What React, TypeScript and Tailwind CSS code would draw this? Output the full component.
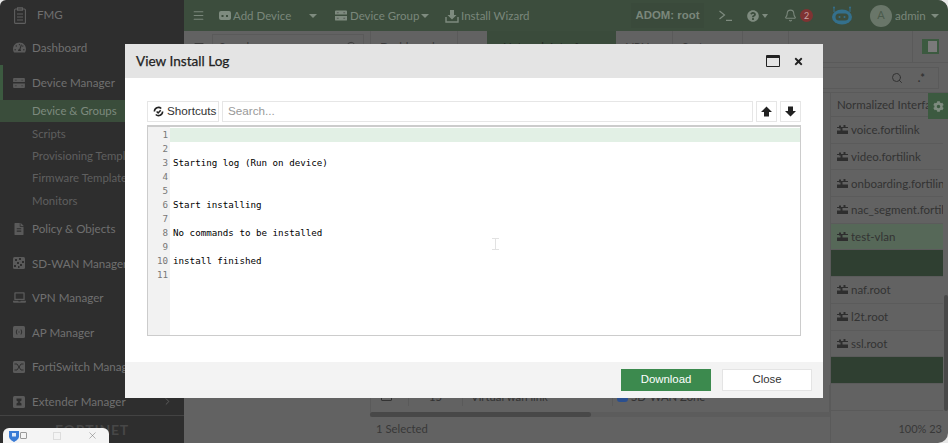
import React from "react";
import { Menu, ChevronRight, Search, X, Bell } from "lucide-react";
import { FaCog, FaTimes, FaQuestionCircle, FaTachometerAlt, FaFileAlt, FaLaptop } from "react-icons/fa";

const ICON = "#5a5a5a";
const BAR = "#7e8b7f";

function GridIcon({ color = ICON, w = 13, h = 11 }: { color?: string; w?: number; h?: number }) {
  return (
    <svg width={w} height={h} viewBox="0 0 13 11" className="shrink-0">
      <path d="M0 1a1 1 0 0 1 1-1h11a1 1 0 0 1 1 1v3.5H0zM0 6h13v4a1 1 0 0 1-1 1H1a1 1 0 0 1-1-1z" fill={color} />
      <path d="M2 2h2v1H2zM9 2h2v1H9zM2 8h2v1H2zM9 8h2v1H9z" fill="#2e2e2e" opacity="0.5" />
    </svg>
  );
}

function BoxIcon({ kind }: { kind: string }) {
  return (
    <svg width="12" height="12" viewBox="0 0 12 12" className="shrink-0">
      <rect width="12" height="12" rx="1.5" fill={ICON} />
      {kind === "ap" && <path d="M4 3.5Q2.5 6 4 8.5M8 3.5Q9.5 6 8 8.5M5.5 6h1" stroke="#2e2e2e" fill="none" />}
      {kind === "sw" && <path d="M1.5 3h2.5l4 6h2.5M1.5 9h2.5l4-6h2.5" stroke="#2e2e2e" fill="none" />}
      {kind === "ext" && <path d="M3.5 2.5h5v2l-2 1.5 2 1.5v2h-5v-2l2-1.5-2-1.5z" fill="#2e2e2e" />}
      {kind === "sd" && <path d="M2 2h2v2H2zM6 1h2v2H6zM9 4h2v2H9zM4 5h2v2H4zM1 8h2v2H1zM7 7h2v2H7zM5 9h1.5v2H5z" fill="#2e2e2e" />}
    </svg>
  );
}

function Side({ label, icon, active }: { label: string; icon: React.ReactNode; active?: boolean }) {
  return (
    <div className={`flex h-[34.6px] shrink-0 items-center border-l-[3px] pl-[10px] text-[11.6px] ${active ? "border-[#3c5a40]" : "border-transparent"}`}>
      <span className="flex w-[19px] shrink-0">{icon}</span>
      <span className="whitespace-nowrap text-[#707070]">{label}</span>
    </div>
  );
}

function Sub({ label, active }: { label: string; active?: boolean }) {
  return (
    <div className={`flex h-[22.3px] shrink-0 items-center pl-[32px] text-[11.4px] whitespace-nowrap ${active ? "bg-[#3a4d3b] text-[#7d8a7e]" : "text-[#5f5f5f]"}`}>
      {label}
    </div>
  );
}

function IfaceIcon() {
  return (
    <svg width="11" height="9" viewBox="0 0 11 9" className="shrink-0">
      <path d="M0 2h11v1H0zM0 5.5h11V9H0z" fill="#2e2e2e" />
      <path d="M2 0.5h2v3H2zM6.5 0h2v3H6.5zM3.5 3h2v3h-2z" fill="#2e2e2e" />
    </svg>
  );
}

function Row({ label, tone }: { label?: string; tone?: "dark" | "sel" }) {
  const bg = tone === "dark" ? "bg-[#2f3f31]" : tone === "sel" ? "bg-[#566858]" : "";
  return (
    <div className={`flex h-[26.7px] shrink-0 items-center gap-[3px] overflow-hidden border-b border-[#5b5b5b] pl-[6px] text-[11.5px] text-[#333] whitespace-nowrap ${bg}`}>
      {label && <IfaceIcon />}
      {label}
    </div>
  );
}

function Caret({ className = "" }: { className?: string }) {
  return <span className={`shrink-0 border-x-[4px] border-t-[4px] border-x-transparent border-t-[#7e8b7f] ${className}`} />;
}

function Arrow({ down }: { down?: boolean }) {
  return (
    <svg width="11" height="11" viewBox="0 0 11 11" className={down ? "rotate-180" : ""}>
      <path d="M5.5 0.5L11 6H8v4.5H3V6H0z" fill="#222" />
    </svg>
  );
}

export default function App() {
  const lines = ["", "", "Starting log (Run on device)", "", "", "Start installing", "", "No commands to be installed", "", "install finished", ""];
  return (
    <div className="relative flex h-[443px] w-[948px] overflow-hidden bg-[#e8e8e8] font-['Lato','Open_Sans',sans-serif]">
      <aside className="flex w-[184px] shrink-0 flex-col rounded-tl-[6px] bg-[#2e2e2e]">
        <div className="flex h-[30px] shrink-0 items-center gap-[11px] pl-[14px] text-[11.6px] text-[#707070]">
          <svg width="12" height="17" viewBox="0 0 12 17" fill="none" stroke="#5f5f5f" strokeWidth="1.1">
            <rect x="0.6" y="2" width="10.8" height="14.4" rx="1" />
            <path d="M3.5 0.8h5v2.4h-5zM3 7h6M3 10h6M3 13h6" />
          </svg>
          FMG
        </div>
        <Side label="Dashboard" icon={<FaTachometerAlt size={13} color={ICON} />} />
        <div className="h-[0.7px] shrink-0" />
        <Side label="Device Manager" active icon={<GridIcon w={12} h={10} />} />
        <Sub label="Device & Groups" active />
        <Sub label="Scripts" />
        <Sub label="Provisioning Templates" />
        <Sub label="Firmware Templates" />
        <Sub label="Monitors" />
        <Side label="Policy & Objects" icon={<FaFileAlt size={12} color={ICON} />} />
        <Side label="SD-WAN Manager" icon={<BoxIcon kind="sd" />} />
        <Side label="VPN Manager" icon={<FaLaptop size={13} color={ICON} />} />
        <Side label="AP Manager" icon={<BoxIcon kind="ap" />} />
        <Side label="FortiSwitch Manager" icon={<BoxIcon kind="sw" />} />
        <div className="relative shrink-0">
          <Side label="Extender Manager" icon={<BoxIcon kind="ext" />} />
          <ChevronRight size={11} className="absolute right-[11px] top-[12px] text-[#5f5f5f]" />
        </div>
        <div className="-mt-[4px] flex flex-1 items-center justify-center border-t border-[#434343] bg-[#2e2e2e] text-[14px] font-bold tracking-[0.8px] text-[#474747]">
          FORTINET
        </div>
      </aside>

      <main className="flex min-w-0 flex-1 flex-col overflow-hidden rounded-r-[10px] bg-[#626262]">
        <header className="flex h-[31px] shrink-0 items-center bg-[#3c4d3d] pl-[8px] text-[11.5px] text-[#7a877b]">
          <Menu size={13} className="mr-[14px] shrink-0" />
          <svg width="12" height="9" viewBox="0 0 12 9" className="mr-[2px] shrink-0"><rect width="12" height="9" rx="2" fill={BAR} /><path d="M2.5 4h2v2h-2zM7 4h2v2H7z" fill="#3c4d3d" /></svg>
          <span className="w-[76px] shrink-0">Add Device</span>
          <Caret className="mr-[18px]" />
          <GridIcon color={BAR} w={12} h={11} />
          <span className="ml-[3px] w-[71px] shrink-0 whitespace-nowrap">Device Group</span>
          <Caret className="mr-[16px]" />
          <svg width="14" height="14" viewBox="0 0 14 14" className="mr-[2px] shrink-0"><path d="M1 8v5h12V8" fill="none" stroke={BAR} strokeWidth="1.4" /><path d="M5 1h4v5h2.5L7 10.5 2.5 6H5z" fill={BAR} /></svg>
          <span className="w-[66px] shrink-0 whitespace-nowrap">Install Wizard</span>
          <span className="ml-[104px] flex h-[25px] w-[73px] shrink-0 items-center justify-center bg-[#3a4a3b] font-['Liberation_Sans',sans-serif] text-[11.4px] font-bold">ADOM: root</span>
          <svg width="13" height="11" viewBox="0 0 13 11" className="ml-[15px] shrink-0" fill="none" stroke={BAR} strokeWidth="1.2"><path d="M0.5 1l5 4-5 4M7 10.4h6" /></svg>
          <span className="ml-[15px] shrink-0"><FaQuestionCircle size={12} color={BAR} /></span>
          <span className="ml-[3px] shrink-0 border-x-[3.5px] border-t-[4px] border-x-transparent border-t-[#7e8b7f]" />
          <Bell size={13} className="ml-[16px] shrink-0" />
          <span className="ml-[3px] flex h-[13px] w-[13px] shrink-0 items-center justify-center rounded-full bg-[#7f3333] text-[9px] text-[#c9a5a5]">2</span>
          <svg width="24" height="20" viewBox="0 0 24 20" className="ml-[17px] shrink-0">
            <path d="M4 1v5M20 1v5" stroke="#34708c" strokeWidth="1" />
            <circle cx="4" cy="1.5" r="1" fill="#34708c" /><circle cx="20" cy="1.5" r="1" fill="#34708c" />
            <ellipse cx="12" cy="11" rx="10" ry="7.5" fill="#34708c" />
            <rect x="5.5" y="7.5" width="13" height="7" rx="3.5" fill="#3c4d3d" />
            <circle cx="9.5" cy="11" r="1" fill="#34708c" /><circle cx="14.5" cy="11" r="1" fill="#34708c" />
          </svg>
          <span className="ml-[16px] flex h-[22px] w-[22px] shrink-0 items-center justify-center rounded-full bg-[#697669] text-[11px] text-[#4a5a4b]">A</span>
          <span className="ml-[3px] w-[35px] shrink-0">admin</span>
          <Caret className="ml-[1px]" />
        </header>

        <div className="flex h-[32px] shrink-0 border-b border-[#5a5a5a] text-[11.5px] text-[#3a3a3a]">
          <span className="flex w-[28px] items-center pl-[9px]"><Menu size={12} /></span>
          <div className="my-[3px] flex w-[152px] items-center justify-between border border-[#5a5a5a] pl-[6px] pr-[6px]">Search<Search size={11} /></div>
          <span className="ml-[6px] flex w-[87px] items-center border-l border-[#5a5a5a] pl-[9px]">Dashboard</span>
          <span className="flex w-[30px] items-center justify-center border-l border-[#5a5a5a]"><span className="h-[5px] w-[3px] bg-[#3a3a3a]" /></span>
          <span className="flex w-[129px] items-center justify-center bg-[#3a4b3b] text-[#232a24]">Network Interfaces</span>
          <span className="flex w-[56px] items-center pl-[10px]">VPN</span>
          <span className="flex w-[70px] items-center border-l border-[#5a5a5a] pl-[9px]">System</span>
          <span className="flex w-[47px] items-center justify-center border-x border-[#5a5a5a]"><span className="h-[5px] w-[3px] bg-[#3a3a3a]" /></span>
          <span className="w-[123px]" />
          <span className="flex flex-1 items-center border-l border-[#5a5a5a] pb-[1px] pl-[9px]">
            <span className="flex h-[15px] w-[17px] border-2 border-[#3c5a40] bg-[#7a7a7a]"><span className="w-[4px] bg-[#3c5a40]" /></span>
          </span>
        </div>

        <div className="flex h-[29px] shrink-0 items-center pl-[186px] pr-[9px] text-[11px] text-[#333]">
          <div className="flex h-[22px] flex-1 items-center justify-end gap-[15px] border border-[#5a5a5a] pr-[13px]">
            <Search size={12} />
            <span className="font-bold leading-none">.*</span>
          </div>
        </div>

        <div className="flex min-h-0 flex-1 border-t border-[#5a5a5a]">
          <div className="flex min-w-0 flex-1 flex-col">
            <div className="flex-1" />
            <div className="ml-[186px] flex h-[27px] shrink-0 items-start border-x border-[#5a5a5a] pt-[4px] text-[11.3px] text-[#333]">
              <span className="w-[37px] pl-[10px] pt-[2px]"><span className="block h-[10px] w-[11px] rounded-[1px] border border-[#333]" /></span>
              <span className="w-[54px] border-l border-[#5a5a5a] pl-[20px]">15</span>
              <span className="w-[150px] border-l border-[#5a5a5a] pl-[8px]">Virtual wan link</span>
              <span className="flex flex-1 items-center gap-[3px] whitespace-nowrap border-l border-[#5a5a5a] pl-[4px]"><span className="h-[10px] w-[11px] rounded-[3px] bg-[#2a4f8f]" />SD-WAN Zone</span>
            </div>
            <div className="ml-[186px] flex h-[5px] shrink-0 bg-[#5c5c5c]"><span className="h-full w-[221px] rounded bg-[#484848]" /></div>
            <div className="flex h-[26px] shrink-0 items-center pb-[2px] pl-[192px] text-[11.3px] text-[#383838]">1 Selected</div>
          </div>
          <div className="relative flex w-[118px] shrink-0 flex-col border-l border-[#5a5a5a]">
            <div className="flex h-[24px] shrink-0 items-center overflow-hidden border-b border-[#5a5a5a] pl-[6px] pr-[20px] text-[11.5px] text-[#333] whitespace-nowrap">
              Normalized Interface
            </div>
            <div className="absolute right-0 top-0 flex h-[26px] w-[20px] items-center justify-center bg-[#3c5a40]">
              <FaCog size={11} color={BAR} />
            </div>
            <div className="flex min-h-0 flex-1 flex-col pr-[5px]">
              <Row label="voice.fortilink" />
              <Row label="video.fortilink" />
              <Row label="onboarding.fortilink" />
              <Row label="nac_segment.fortilink" />
              <Row label="test-vlan" tone="sel" />
              <Row tone="dark" />
              <Row label="naf.root" />
              <Row label="l2t.root" />
              <Row label="ssl.root" />
              <Row tone="dark" />
              <div className="flex-1 border-b border-[#5a5a5a]" />
            </div>
            <div className="flex h-[32px] shrink-0 items-center justify-end pt-[5px] pb-[1px] pr-[6px] text-[11px] text-[#383838]">100%&nbsp;23</div>
            <div className="absolute right-0 top-[202px] h-[116px] w-[4px] rounded bg-[#484848]" />
          </div>
        </div>
      </main>

      <div className="absolute left-[125px] top-[44px] flex h-[354px] w-[698px] flex-col bg-white">
        <div className="flex h-[34px] shrink-0 items-center bg-[#e4e4e4] pl-[11px] pr-[19px]">
          <span className="text-[13.6px] text-[#222] [-webkit-text-stroke:0.25px_#222]">View Install Log</span>
          <span className="ml-auto h-[12px] w-[14px] rounded-[1px] border border-t-[3px] border-[#222]" />
          <span className="ml-[13px]"><FaTimes size={11} color="#222" /></span>
        </div>
        <div className="flex flex-1 flex-col px-[22px] pt-[23px]">
          <div className="flex h-[21px] shrink-0 gap-[3px] font-['Liberation_Sans',sans-serif] text-[11.7px]">
            <div className="flex w-[72px] items-center gap-[3px] border border-[#e6e6e6] pb-[1px] pl-[5px] text-[#333]">
              <svg width="11" height="11" viewBox="0 0 12 12" fill="none" stroke="#222" strokeWidth="1.7" className="shrink-0"><path d="M1.5 6a4.5 4.5 0 0 1 7.5-3.3M10.5 6A4.5 4.5 0 0 1 3 9.3M4 6l1.6 1.6L8.4 4.6" /></svg>
              Shortcuts
            </div>
            <div className="flex w-[531px] items-center border border-[#e6e6e6] pb-[1px] pl-[5px] text-[#999]">Search...</div>
            <div className="flex w-[21px] items-center justify-center border border-[#e6e6e6]"><Arrow /></div>
            <div className="flex w-[21px] items-center justify-center border border-[#e6e6e6]"><Arrow down /></div>
          </div>
          <div className="relative mt-[3px] flex h-[211px] w-[654px] shrink-0 border border-t-2 border-[#ccc]">
            <div className="w-[22px] shrink-0 bg-[#f2f2f2] pt-[1px] pr-[2px] text-right font-['DejaVu_Sans_Mono',monospace] text-[9.2px] text-[#777]">
              {lines.map((_, i) => <div key={i} className="h-[14px] leading-[14px]">{i + 1}</div>)}
            </div>
            <div className="min-w-0 flex-1 pt-[1px] font-['DejaVu_Sans_Mono',monospace] text-[9.2px] text-black">
              {lines.map((l, i) => <div key={i} className={`h-[14px] whitespace-pre pl-[3px] leading-[14px] ${i === 0 ? "bg-[#e2f0e5]" : ""}`}>{l}</div>)}
            </div>
            <svg width="7" height="12" viewBox="0 0 7 12" className="absolute left-[344px] top-[111px]" fill="none" stroke="#e2e2e2"><path d="M0 0.5h7M0 11.5h7M3.5 0.5v11" /></svg>
          </div>
        </div>
        <div className="flex h-[36px] shrink-0 items-center justify-end gap-[11px] bg-[#f3f3f3] pr-[11px] font-['Liberation_Sans',sans-serif] text-[11.4px]">
          <span className="flex h-[22px] w-[90px] items-center justify-center bg-[#3c8a4e] text-white">Download</span>
          <span className="flex h-[22px] w-[90px] items-center justify-center border border-[#e4e4e4] bg-white text-[#333]">Close</span>
        </div>
      </div>

      <div className="absolute bottom-0 left-[3px] flex h-[15px] w-[106px] items-center rounded-t-[6px] bg-[#f4f4f4] pl-[6px]">
        <svg width="10" height="12" viewBox="0 0 10 12" className="shrink-0"><path d="M0 1h10v5.5C10 9.5 5 12 5 12S0 9.5 0 6.5z" fill="#3a7bd5" /><rect x="3" y="3" width="4" height="3.5" fill="#dfe9f7" /></svg>
        <span className="ml-[1px] h-[7px] w-[7px] rounded-[1px] border border-[#999]" />
        <span className="ml-[26px] h-[8px] w-[8px] border border-[#ddd]" />
        <X size={11} strokeWidth={1} className="ml-[26px] text-[#666]" />
      </div>
    </div>
  );
}
